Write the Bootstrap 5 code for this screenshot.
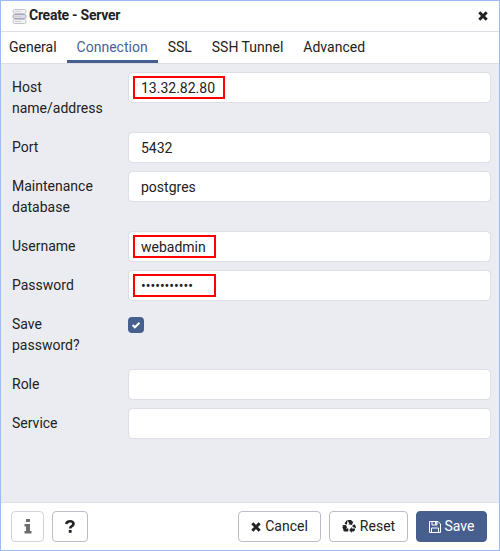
<!DOCTYPE html>
<html lang="en">
<head>
<meta charset="utf-8">
<meta name="viewport" content="width=device-width, initial-scale=1">
<title>Create - Server</title>
<link href="https://cdn.jsdelivr.net/npm/bootstrap@5.3.0/dist/css/bootstrap.min.css" rel="stylesheet">
<style>
body{font-family:Roboto,sans-serif;font-size:14px;line-height:21px;color:#222;overflow:hidden}
.dialog{height:551px;border:1px solid #9abcf2;background:#fff}
.titlebar{height:31px;border-bottom:1px solid #dddfe6;padding:0 11px 0 11px}
.title-text{font-size:14px;font-weight:700;letter-spacing:-.27px;margin-left:2px;padding-bottom:2px}
.tabs{height:32px;border-bottom:1px solid #dddfe6}
.tabs .nav-link{color:#222;padding:5px 10px 0;height:31px;border-bottom:3px solid transparent;border-radius:0}
.tabs .tab-first{padding-left:8px}
.tabs .nav-link.active{color:#46639a;border-bottom-color:#465f8f}
.form-pane{background:#ebecf1;padding:8px 8px 0 11px}
.field{margin-bottom:8px}
.field-label{width:116px;padding:5px 0}
.field .form-control{height:31px;border:1px solid #dddfe6;border-radius:4px;padding:1px 12px 0;font-size:14px;color:#222;box-shadow:none}
.value-box{position:relative}
.highlight{position:absolute;left:5px;top:4px;height:23px;border:2px solid #f00}
.w-host{width:92px}.w-user{width:83px}
.check-tile{width:16px;height:16px;background:#465f8f;border-radius:4px;margin-top:8px}
.footer-bar{height:48px;border-top:1px solid #dddfe6;padding:0 12px 0 10px}
.footer-bar .btn{height:31px;font-size:14px;line-height:21px;padding:0;border:1px solid #bbbccb;border-radius:4px;color:#222;background:#fff}
.footer-bar .btn-save{background:#465f8f;border-color:#465f8f;color:#fff;width:71px}
.footer-bar .btn-info-sm{width:33px;opacity:.65}
.w-help{width:36px}.w-cancel{width:83px}.w-reset{width:79px}
svg{display:block;flex:none}
</style>
</head>
<body>
<div class="dialog d-flex flex-column">
  <header class="titlebar d-flex align-items-center">
    <svg width="15" height="15" viewBox="0 0 15 15"><g fill="#f3f3f3" stroke="#c4c4c6"><rect x="1" y=".5" width="13" height="4" rx="1.5"/><rect x="1" y="10.500" width="13" height="4" rx="1.5"/><rect x="1" y="5.500" width="13" height="4" rx="1.5" fill="#dedbe9" stroke="#aaa6c0"/></g><path d="M3 2.500h6M3 7.500h6M3 12.500h6" stroke="#d0d0d4"/></svg>
    <span class="title-text">Create - Server</span>
    <svg class="ms-auto" width="10" height="10" viewBox="0 0 10 10"><path d="M1.300 1.300 8.700 8.700M8.700 1.300 1.300 8.700" stroke="#222" stroke-width="3"/></svg>
  </header>
  <nav class="tabs nav flex-nowrap">
    <a class="nav-link tab-first">General</a><a class="nav-link active">Connection</a><a class="nav-link">SSL</a><a class="nav-link">SSH Tunnel</a><a class="nav-link">Advanced</a>
  </nav>
  <main class="form-pane flex-grow-1">
    <div class="field d-flex"><label class="field-label">Host<br>name/address</label><div class="value-box flex-grow-1"><input class="form-control" value="13.32.82.80"><span class="highlight w-host"></span></div></div>
    <div class="field d-flex"><label class="field-label">Port</label><div class="value-box flex-grow-1"><input class="form-control" value="5432"></div></div>
    <div class="field d-flex"><label class="field-label">Maintenance<br>database</label><div class="value-box flex-grow-1"><input class="form-control" value="postgres"></div></div>
    <div class="field d-flex"><label class="field-label">Username</label><div class="value-box flex-grow-1"><input class="form-control" value="webadmin"><span class="highlight w-user"></span></div></div>
    <div class="field d-flex"><label class="field-label">Password</label><div class="value-box flex-grow-1"><input class="form-control" type="password" value="abcdefghijk"><span class="highlight w-user"></span></div></div>
    <div class="field d-flex"><label class="field-label">Save<br>password?</label><div class="check-tile"><svg width="16" height="16" viewBox="0 0 16 16"><path d="m4.600 8 2.300 2.300 4.600-4.600" fill="none" stroke="#fff" stroke-width="2"/></svg></div></div>
    <div class="field d-flex"><label class="field-label">Role</label><div class="value-box flex-grow-1"><input class="form-control"></div></div>
    <div class="field d-flex"><label class="field-label">Service</label><div class="value-box flex-grow-1"><input class="form-control"></div></div>
  </main>
  <footer class="footer-bar d-flex align-items-center gap-2">
    <button class="btn btn-info-sm d-flex align-items-center justify-content-center"><svg width="8" height="15" viewBox="0 0 8 15"><path d="M2 0h4v3H2zM.5 5H6v7h1.500v2.500h-7V12H2V7.500H.5z" fill="#222"/></svg></button>
    <button class="btn w-help d-flex align-items-center justify-content-center"><svg width="10" height="13" viewBox="0 0 10 13"><path d="M1.200 4Q2 1.300 5 1.300 8.500 1.300 8.500 4 8.500 5.300 6.500 6.300 5.200 7 5.200 8.600" fill="none" stroke="#222" stroke-width="2.600"/><path d="M3.800 10h2.800v2.800H3.800z" fill="#222"/></svg></button>
    <button class="btn w-cancel ms-auto d-flex align-items-center justify-content-center gap-1"><svg width="10" height="10" viewBox="0 0 10 10"><path d="M1.300 1.300 8.700 8.700M8.700 1.300 1.300 8.700" stroke="#222" stroke-width="3"/></svg>Cancel</button>
    <button class="btn w-reset d-flex align-items-center justify-content-center gap-1"><svg width="14" height="13" viewBox="0 0 14 13"><g fill="#222"><path d="M4.600.6Q5 0 5.700 0L4.900 4.700 2.500 3.600zM6.200 0H8.700Q9.300 0 9.700.6L10.400 1.700 11.500 1.100 10 4.900 6.200 4.200 7.300 3.500 5.800.9z"/><path d="M10.500 5.600 12.700 4.300 13.800 6.500Q14.200 7.400 13.700 8.100L10.500 6.900zM13.400 8.700 12.300 10.900Q12 11.500 11.200 11.500H9.700V13L7.200 9.900 9.700 6.900V8.400L12.400 8.600z"/><path d="M0 5.200 4 4.900 5.400 8.400 4.200 7.700 2.700 10.500Q1.700 10 .7 8.200.2 7.600.6 6.800L1.200 5.900zM3.200 8.600H6.300V11.500H2.700Q1.900 11.500 1.500 10.700L1 9.700z"/></g></svg>Reset</button>
    <button class="btn btn-save d-flex align-items-center justify-content-center gap-1"><svg width="12" height="12" viewBox="0 0 12 12"><path d="M.5.5h8.500l2.500 2.500v8.500H.5zM3 .5v3.500h5V.5M2.500 11.500V7h7v4.500" fill="none" stroke="#fff"/><path d="M6 1h1.500v2.500H6z" fill="#fff"/></svg>Save</button>
  </footer>
</div>
<script src="https://cdn.jsdelivr.net/npm/bootstrap@5.3.0/dist/js/bootstrap.bundle.min.js"></script>
</body>
</html>
